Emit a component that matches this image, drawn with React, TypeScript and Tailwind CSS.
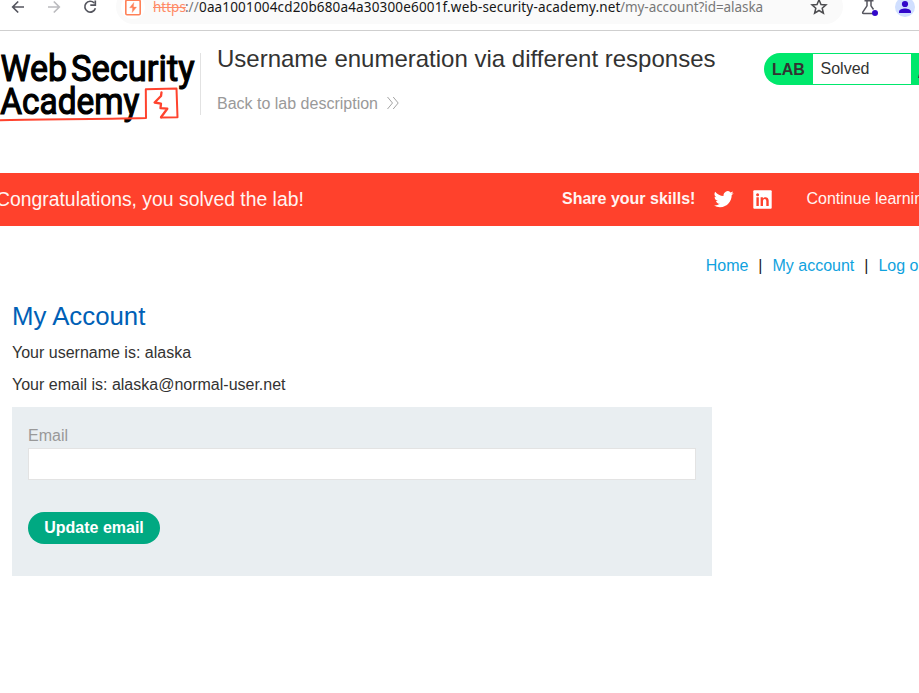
function BrowserBar() {
  return (
    <div className="flex h-[31px] shrink-0 items-start overflow-hidden border-b border-[#cfcfcf] bg-white">
      <svg width="116" height="30" viewBox="0 0 116 30" fill="none" className="shrink-0">
        <g strokeWidth="1.7">
          <path d="M24 7H13M18.2 1.5L12.7 7L18.2 12.5" stroke="#55565f" />
          <path d="M48 7H59M53.8 1.5L59.3 7L53.8 12.5" stroke="#bbbbbf" />
          <path d="M94.2 3A5.4 5.4 0 1 0 95.4 8.2" stroke="#55565f" />
          <path d="M95.3 0.5V5.2H90.3" stroke="#55565f" />
        </g>
      </svg>
      <div className="mt-[-11px] flex h-[35px] w-[727px] shrink-0 items-center rounded-full bg-[#fafafa]">
        <div className="ml-[5px] flex size-6 items-center justify-center rounded-full bg-white">
          <svg width="16" height="18" viewBox="0 0 16 18" fill="none" className="mt-0.5">
            <rect x="0.8" y="1.2" width="14.4" height="14.6" rx="1.2" stroke="#ff8158" strokeWidth="1.6" />
            <path d="M8.8 3.4L4.6 8.8H7.5V9.6L7.2 13.6L11.6 8.1H8.5V7.2Z" fill="#ff8158" stroke="#ff8158" strokeWidth="0.3" />
          </svg>
        </div>
        <div className="ml-2 mt-0.5 flex h-[21px] items-center whitespace-nowrap font-['Noto_Sans',sans-serif] text-[13.5px] leading-[21px] text-[#777]">
          <span className="w-[32px] text-[#ff8a66] line-through">https</span>
          <span className="w-[14px]">://</span>
          <span className="w-[421px] tracking-[0.16px] text-[#161616]">0aa1001004cd20b680a4a30300e6001f.web-security-academy.net</span>
          <span className="w-[143px] tracking-[-0.06px]">/my-account?id=alaska</span>
        </div>
        <svg width="18" height="18" viewBox="0 0 18 18" fill="none" className="ml-[47px]">
          <path d="M9 1.8L11 6.5L16 6.9L12.2 10.2L13.4 15.2L9 12.5L4.6 15.2L5.8 10.2L2 6.9L7 6.5Z" stroke="#4d4d50" strokeWidth="1.5" />
        </svg>
      </div>
      <svg width="76" height="30" viewBox="843 0 76 30" fill="none" className="shrink-0">
        <path d="M864.5 0.8H873.5M867 1V5.8L862.8 12.2Q862.2 13.4 863.5 13.4H873M871 1V5.8L873.5 9.5" stroke="#56565f" strokeWidth="1.5" />
        <circle cx="875" cy="13" r="3" fill="#3208ca" />
        <circle cx="905" cy="7" r="10" fill="#d0dfff" />
        <circle cx="905" cy="4" r="3.1" fill="#3208ca" />
        <path d="M899 13V11.5C899 9.6 902.5 8.4 905 8.4S911 9.6 911 11.5V13Z" fill="#3208ca" />
      </svg>
    </div>
  );
}

function Logo() {
  return (
    <svg width="200" height="80" viewBox="0 46 200 80" fill="none" className="shrink-0">
      <g fill="#000" stroke="#000" strokeWidth="1.2" fontFamily="Roboto, sans-serif" fontWeight="400" fontSize="37.4">
        <text x="0.5" y="81.4" textLength="66.5" lengthAdjust="spacingAndGlyphs">Web</text>
        <text x="71" y="81.4" textLength="123.5" lengthAdjust="spacingAndGlyphs">Security</text>
        <text x="0.3" y="113.8" textLength="139" lengthAdjust="spacingAndGlyphs">Academy</text>
      </g>
      <g stroke="#ff432e" strokeLinejoin="round" strokeLinecap="round">
        <path d="M0 120.2C35 119 92 119.4 146 118L145.8 89.2L176.5 88.6L177.5 117.3L161 117.6" strokeWidth="2" />
        <path d="M161.5 92.3L161 96L154.6 102.5L161 103.7L160.5 108.2L167.3 108.7L161 117.2" strokeWidth="2.3" />
      </g>
    </svg>
  );
}

function LabHeader() {
  return (
    <header className="flex h-[142px] items-start overflow-hidden">
      <div className="mt-[15px] flex shrink-0"><Logo /></div>
      <div className="mt-[22px] h-[62px] w-px shrink-0 bg-[#e2e2e2]" />
      <div className="ml-4 mt-[14px] w-[547px] shrink-0">
        <h2 className="whitespace-nowrap text-[24px] leading-[28px]">Username enumeration via different responses</h2>
        <a className="mt-[20px] flex items-center text-[16px] leading-[22px] text-[#999]">
          Back to lab description
          <svg width="12" height="14" viewBox="0 0 12 14" fill="none" stroke="#999" strokeWidth="0.9" className="mb-0.5 ml-[9px]">
            <path d="M0.5 1L5.5 7L0.5 13M6.2 1L11.2 7L6.2 13" />
          </svg>
        </a>
      </div>
      <div className="mt-[22px] flex h-8 w-[190px] shrink-0 rounded-l-[16px] bg-[#00e86c] text-[16px] leading-[30px]">
        <b className="w-[49px] pl-2 leading-[34px]">LAB</b>
        <span className="my-px w-[98px] bg-white pl-[7.5px]">Solved</span>
        <svg width="8" height="32" viewBox="0 0 8 32"><path d="M7 25L8 21V25Z" fill="#333332" /></svg>
      </div>
    </header>
  );
}

function SolvedBanner() {
  return (
    <section className="flex h-[53px] items-center overflow-hidden whitespace-nowrap bg-[#ff412c] text-[16px] leading-[24px] text-[#fff4f2]">
      <h4 className="-ml-[4px] mb-0.5 w-[566px] shrink-0 text-[19.36px]">Congratulations, you solved the lab!</h4>
      <b className="mb-0.5 w-[151.5px] shrink-0">Share your skills!</b>
      <svg width="20" height="20" viewBox="0 0 24 24" fill="#fff" className="mb-px shrink-0">
        <path d="M23.6 4.8a9.7 9.7 0 0 1-2.8.8 4.8 4.8 0 0 0 2.1-2.7 9.8 9.8 0 0 1-3.1 1.2A4.9 4.9 0 0 0 11.5 8.5A13.9 13.9 0 0 1 1.4 3.4a4.9 4.9 0 0 0 1.5 6.5 4.9 4.9 0 0 1-2.2-.6v.1a4.9 4.9 0 0 0 3.9 4.8 4.9 4.9 0 0 1-2.2.1 4.9 4.9 0 0 0 4.6 3.4A9.9 9.9 0 0 1-.3 19.7a13.9 13.9 0 0 0 7.5 2.2c9.1 0 14-7.5 14-14v-.6a10 10 0 0 0 2.4-2.5z" />
      </svg>
      <svg width="19" height="19" viewBox="0 0 19 19" className="ml-[19.5px] shrink-0">
        <rect x="0.3" y="0.3" width="18.4" height="18.4" rx="1" fill="#fff" />
        <g fill="#ff412c"><circle cx="4.6" cy="4.7" r="1.5" /><path d="M3.4 7.3H5.8V16H3.4ZM7.6 7.3H9.9V8.5C11.4 6.2 15.7 6.7 15.7 10.7V16H13.3V11.3C13.3 8.3 10 8.5 10 11.3V16H7.6Z" /></g>
      </svg>
      <span className="mb-0.5 ml-[34.5px]">Continue learning</span>
    </section>
  );
}

export default function App() {
  return (
    <div className="flex h-[693px] w-[919px] flex-col overflow-hidden bg-white font-['Liberation_Sans',Arial,sans-serif] text-[#333332]">
      <BrowserBar />
      <LabHeader />
      <SolvedBanner />
      <nav className="ml-[705.7px] mt-[28px] flex w-[250px] whitespace-nowrap text-[16px] leading-[24px] text-[#10a2de]">
        <a className="w-[52.5px]">Home</a>
        <span className="w-[14.3px] text-[#222]">|</span>
        <a className="w-[91.7px]">My account</a>
        <span className="w-[14.3px] text-[#222]">|</span>
        <a>Log out</a>
      </nav>
      <main className="px-3 pt-[20px] text-[16px] leading-[24px]">
        <h1 className="text-[25.8px] leading-[36px] text-[#0060b6]">My Account</h1>
        <p className="mt-[7px]">Your username is: alaska</p>
        <p className="mt-2">Your email is: alaska@normal-user.net</p>
        <form className="mt-[10px] flex h-[169px] w-[700px] flex-col items-start bg-[#e9eef1] px-4 pt-[17px]">
          <label className="text-[#999]">Email</label>
          <input className="h-8 w-full border border-[#e3e3e3] bg-white px-2 outline-none" />
          <button type="button" className="mt-8 h-8 w-[132px] rounded-full bg-[#00a982] font-bold leading-[32px] text-white">Update email</button>
        </form>
      </main>
    </div>
  );
}
